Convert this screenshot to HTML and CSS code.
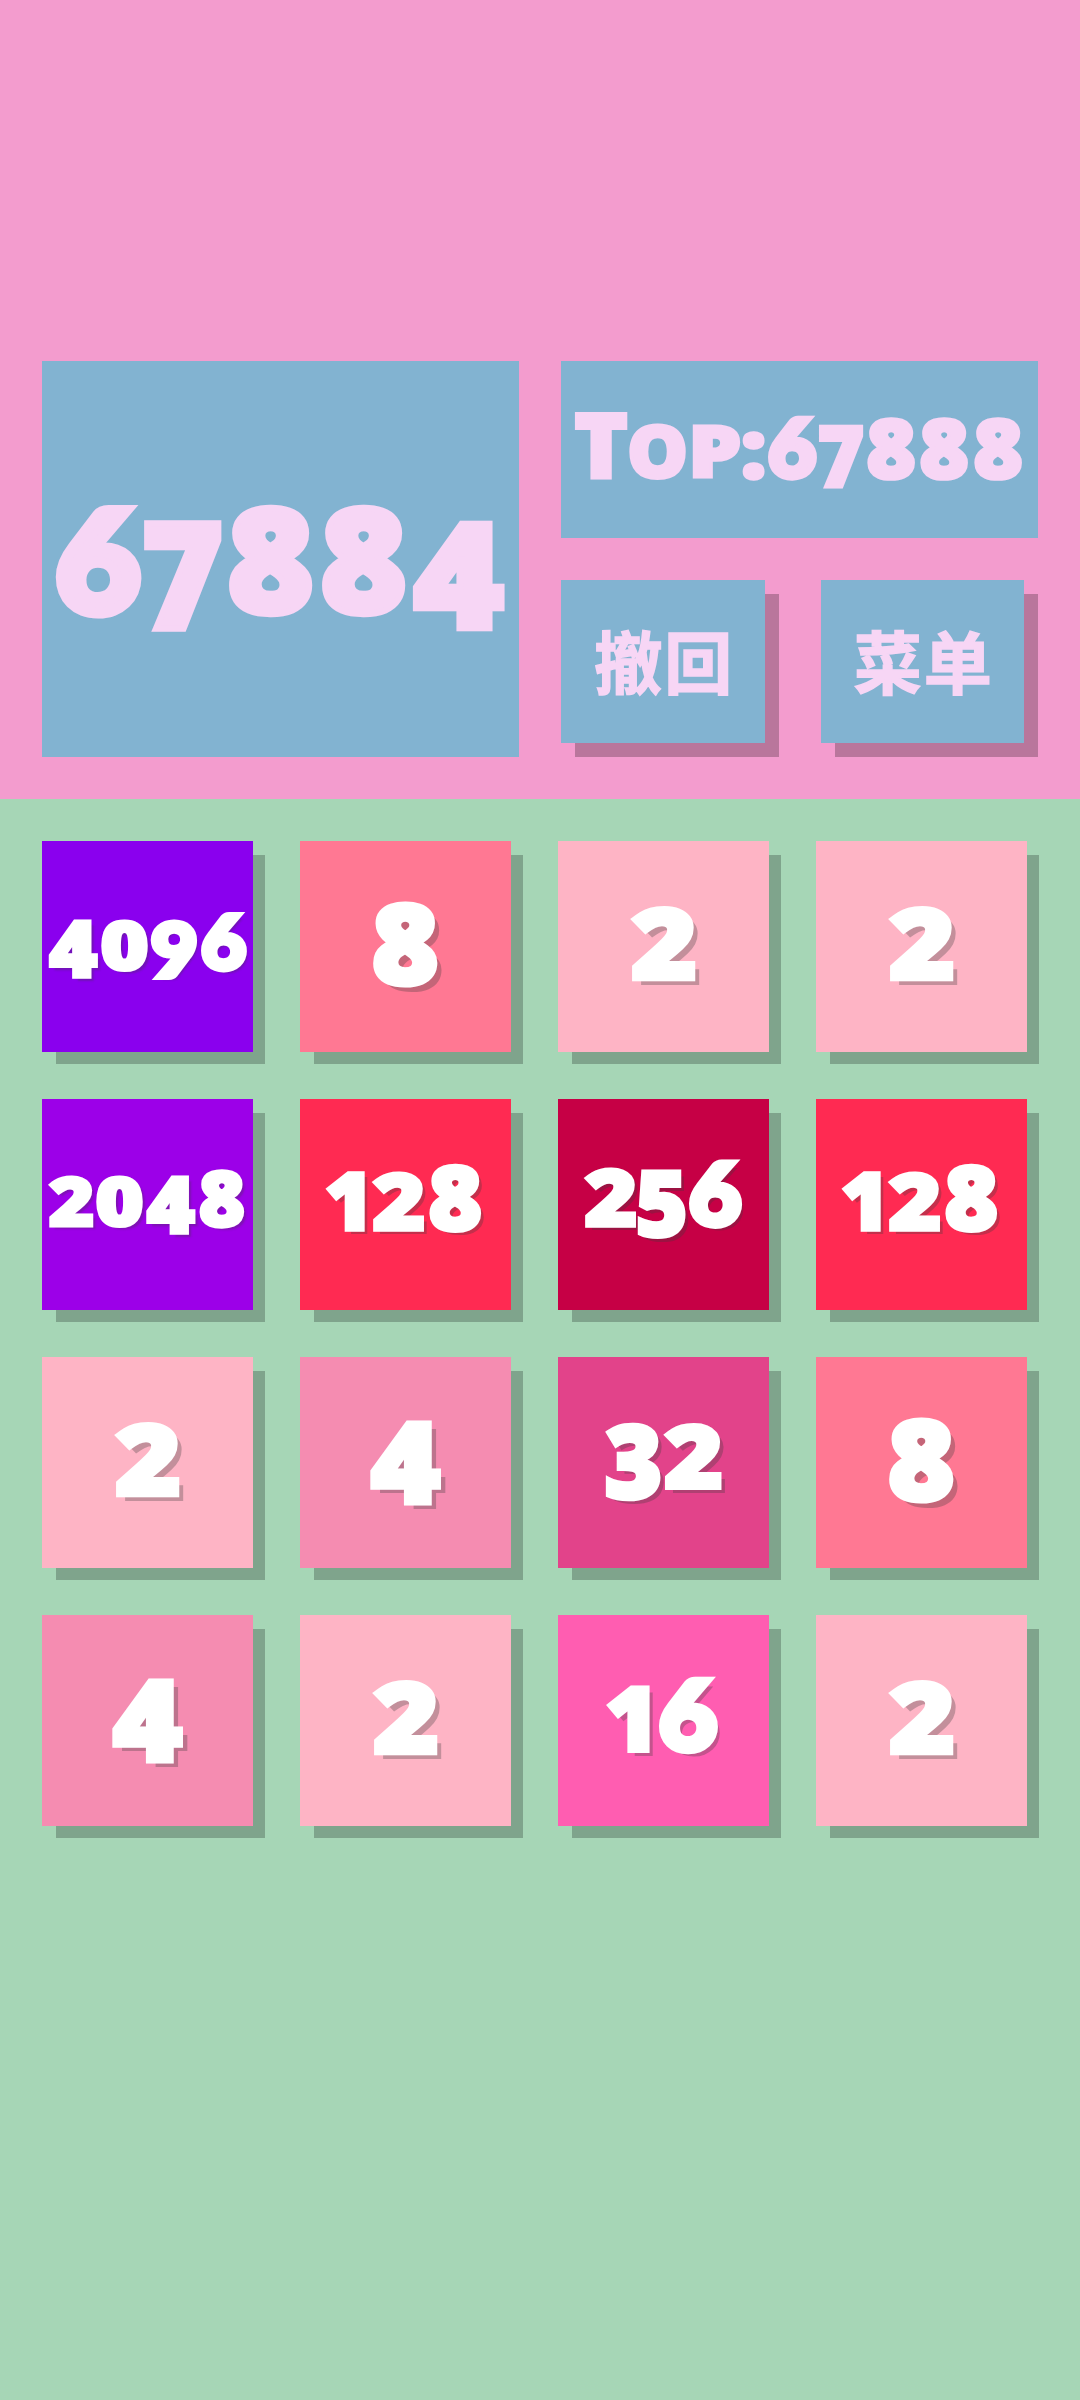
FILE: index.html
```html
<!DOCTYPE html>
<html lang="zh-CN">
<head>
<meta charset="utf-8">
<title>2048</title>
<link rel="stylesheet" href="styles.css">
</head>
<body>
<header class="header">
  <div class="panel score"><div class="num"><span class="d6">6</span><span class="d7">7</span><span class="d8">8</span><span class="d8">8</span><span class="d4">4</span></div></div>
  <div class="side">
    <div class="panel best"><div class="num"><span class="lt">T</span><span class="lo">o</span><span class="lp">p</span><span class="lc">:</span><span class="d6">6</span><span class="d7">7</span><span class="d8">8</span><span class="d8">8</span><span class="d8">8</span></div></div>
    <div class="actions">
      <button class="action">撤回</button>
      <button class="action">菜单</button>
    </div>
  </div>
</header>
<main class="board">
  <div class="tile t4096"><div class="num"><span class="d4">4</span><span class="d0">0</span><span class="d9">9</span><span class="d6">6</span></div></div>
  <div class="tile t8"><div class="num"><span class="d8">8</span></div></div>
  <div class="tile t2"><div class="num"><span class="d2">2</span></div></div>
  <div class="tile t2"><div class="num"><span class="d2">2</span></div></div>

  <div class="tile t2048"><div class="num"><span class="d2">2</span><span class="d0">0</span><span class="d4">4</span><span class="d8">8</span></div></div>
  <div class="tile t128"><div class="num"><span class="d1">1</span><span class="d2">2</span><span class="d8">8</span></div></div>
  <div class="tile t256"><div class="num"><span class="d2">2</span><span class="d5">5</span><span class="d6">6</span></div></div>
  <div class="tile t128"><div class="num"><span class="d1">1</span><span class="d2">2</span><span class="d8">8</span></div></div>

  <div class="tile t2"><div class="num"><span class="d2">2</span></div></div>
  <div class="tile t4"><div class="num"><span class="d4">4</span></div></div>
  <div class="tile t32"><div class="num"><span class="d3">3</span><span class="d2">2</span></div></div>
  <div class="tile t8"><div class="num"><span class="d8">8</span></div></div>

  <div class="tile t4"><div class="num"><span class="d4">4</span></div></div>
  <div class="tile t2"><div class="num"><span class="d2">2</span></div></div>
  <div class="tile t16"><div class="num"><span class="d1">1</span><span class="d6">6</span></div></div>
  <div class="tile t2"><div class="num"><span class="d2">2</span></div></div>
</main>
</body>
</html>
```
FILE: styles.css
```css
* { box-sizing: border-box; }

body {
  margin: 0;
  min-height: 2400px;
  background: #a6d6b6;
  font-family: "Open Sans", "Noto Sans CJK SC", sans-serif;
}

.header {
  display: grid;
  grid-template-columns: 477px 477px;
  gap: 42px;
  height: 799px;
  padding: 361px 42px 42px;
  background: #f39cce;
}

.panel {
  background: #82b3d1;
  color: #f7d6f5;
}

.score { padding-top: 116.7px; font-size: 153px; }
.side { display: flex; flex-direction: column; gap: 42px; }
.best { height: 177px; padding-top: 39.5px; font-size: 87.5px; }

.actions { display: flex; gap: 56px; padding-right: 14px; }

.action {
  flex: 1;
  height: 163px;
  margin: 0;
  padding: 0 0 4px 3px;
  border: 0;
  background: #82b3d1;
  color: #f7d6f5;
  box-shadow: 14px 14px 0 rgba(0, 0, 0, .24);
  font: 700 68px/1 "Noto Sans CJK SC", sans-serif;
  letter-spacing: 2px;
  -webkit-text-stroke: 1.5px currentColor;
}

.board {
  display: grid;
  grid-template-columns: repeat(4, 211px);
  grid-auto-rows: 211px;
  gap: 47px;
  padding: 42px;
}

.tile {
  color: #fff;
  box-shadow: 13px 13px 0 -1px rgba(0, 0, 0, .23);
}

.t2 { background: #feb4c5; padding-top: 33.7px; }
.t4 { background: #f58cb1; padding-top: 31.4px; }
.t8 { background: #ff7893; padding-top: 39.8px; }
.t16 { background: #ff5db1; padding-top: 42.5px; }
.t32 { background: #e2438a; padding-top: 37.7px; }
.t128 { background: #ff2a52; padding-top: 47.2px; }
.t256 { background: #c60045; padding-top: 43.4px; }
.t2048 { background: #9c00e8; padding-top: 54.2px; }
.t4096 { background: #8a00ee; padding-top: 55.5px; }

.t2, .t4, .t8 { font-size: 118px; text-shadow: 7px 7px 0 rgba(60, 60, 60, .3); }
.t16, .t32 { font-size: 105.5px; text-shadow: 6px 6px 0 rgba(60, 60, 60, .3); }
.t128, .t256 { font-size: 95px; text-shadow: 5px 5px 0 rgba(60, 60, 60, .3); }
.t2048, .t4096 { font-size: 82px; text-shadow: 4px 4px 2px rgba(60, 60, 60, .3); }

/* Old-style figures: short 0 1 2, descending 3 4 5 7 9, tall 6 8 */
.num {
  display: flex;
  justify-content: center;
  height: 1em;
  line-height: 1;
  font-weight: 800;
}

.num span {
  display: flex;
  justify-content: center;
  flex: none;
  transform-origin: 50% 88.8%;
  -webkit-text-stroke: .045em currentColor;
}

.num .d6, .num .d9 {
  font-family: Lato, sans-serif;
  font-weight: 900;
  -webkit-text-stroke-width: .08em;
}

.d0 { width: .55em; margin: 0 .03em; transform: scale(1.01, .83); }
.d1 { width: .36em; margin: 0 .09em 0 .03em; transform: translateX(.02em) scale(.87, .84); }
.d2 { width: .525em; margin: 0 .02em; transform: scale(.95, .82); }
.d3 { width: .5em; margin: 0 .035em 0 .03em; transform: translateY(.09em) scale(.93, .95); }
.d4 { width: .59em; margin: 0 .02em; transform: translateY(.09em) scale(1, .95); }
.d5 { width: .5em; margin: 0 .03em 0 .005em; transform: translateY(.11em) scale(.93, .95); }
.d6 { width: .55em; margin: 0 .02em 0 .01em; transform: translateY(-.008em) scale(.94, .905); }
.d7 { width: .5em; margin: 0 .02em 0 .01em; transform: translateY(.095em) scale(.9, .96); }
.d8 { width: .53em; margin: 0 .04em; transform: translateY(-.005em) scale(.96, .935); }
.d9 { width: .57em; margin: 0 .025em; transform: translateY(.08em) scale(.98, .915); }

.lt { width: .6em; margin: 0 .01em; transform: translateY(-.01em) scale(1.02, 1.02); }
.lo { width: .633em; margin: 0 .04em 0 .013em; text-transform: uppercase; transform: scale(.87, .82); }
.lp { width: .56em; margin: 0 .013em 0 .04em; text-transform: uppercase; transform: translate(-.02em, -.01em) scale(.96, .8); }
.lc { width: .24em; margin: 0 .037em 0 .01em; transform: scale(1, .91); }
```
